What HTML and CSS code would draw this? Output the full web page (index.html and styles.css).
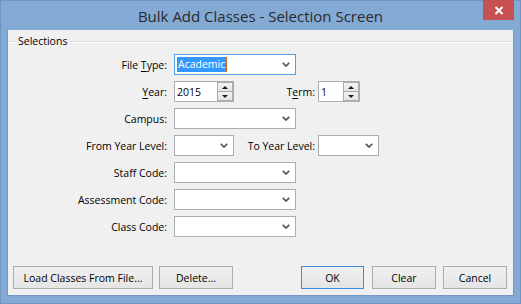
FILE: index.html
```html
<!DOCTYPE html>
<html>
<head>
<meta charset="utf-8">
<link rel="stylesheet" href="styles.css">
</head>
<body>
<div class="window">
  <div class="titlebar">
    <div></div>
    <div class="title">Bulk Add Classes - Selection Screen</div>
    <div class="close-wrap">
      <div class="close">
        <svg width="10" height="9" viewBox="0 0 10 9"><path d="M1.5 1 L8.5 8 M8.5 1 L1.5 8" stroke="#fff" stroke-width="2" fill="none"/></svg>
      </div>
    </div>
  </div>
  <div class="client">
    <div class="group-head"><span class="gl gl-left"></span><span class="gtitle">Selections</span><span class="gl gl-right"></span></div>
    <div class="form">
      <div class="row">
        <div class="lab">File <u>T</u>ype:</div>
        <div class="combo focus w122"><span class="val"><span class="sel">Academic</span><span class="caret"></span></span>
          <svg class="chev" width="8" height="5" viewBox="0 0 8 5"><path d="M0.8 0.8 L4 4 L7.2 0.8" stroke="#555" stroke-width="1.7" fill="none"/></svg></div>
      </div>
      <div class="row">
        <div class="lab"><u>Y</u>ear:</div>
        <div class="spin w60"><span class="val">2015</span><span class="spinbtns"><span class="sb up"></span><span class="sb down"></span></span></div>
        <div class="lab2">T<u>e</u>rm:</div>
        <div class="spin w42"><span class="val">1</span><span class="spinbtns"><span class="sb up"></span><span class="sb down"></span></span></div>
      </div>
      <div class="row">
        <div class="lab">Campus:</div>
        <div class="combo w122"><span class="val"></span>
          <svg class="chev" width="8" height="5" viewBox="0 0 8 5"><path d="M0.8 0.8 L4 4 L7.2 0.8" stroke="#555" stroke-width="1.7" fill="none"/></svg></div>
      </div>
      <div class="row">
        <div class="lab">From Year Level:</div>
        <div class="combo w60"><span class="val"></span>
          <svg class="chev" width="8" height="5" viewBox="0 0 8 5"><path d="M0.8 0.8 L4 4 L7.2 0.8" stroke="#555" stroke-width="1.7" fill="none"/></svg></div>
        <div class="lab2">To Year Level:</div>
        <div class="combo w61"><span class="val"></span>
          <svg class="chev" width="8" height="5" viewBox="0 0 8 5"><path d="M0.8 0.8 L4 4 L7.2 0.8" stroke="#555" stroke-width="1.7" fill="none"/></svg></div>
      </div>
      <div class="row">
        <div class="lab">Staff Code:</div>
        <div class="combo w122"><span class="val"></span>
          <svg class="chev" width="8" height="5" viewBox="0 0 8 5"><path d="M0.8 0.8 L4 4 L7.2 0.8" stroke="#555" stroke-width="1.7" fill="none"/></svg></div>
      </div>
      <div class="row">
        <div class="lab">Assessment Code:</div>
        <div class="combo w122"><span class="val"></span>
          <svg class="chev" width="8" height="5" viewBox="0 0 8 5"><path d="M0.8 0.8 L4 4 L7.2 0.8" stroke="#555" stroke-width="1.7" fill="none"/></svg></div>
      </div>
      <div class="row">
        <div class="lab">Class Code:</div>
        <div class="combo w122"><span class="val"></span>
          <svg class="chev" width="8" height="5" viewBox="0 0 8 5"><path d="M0.8 0.8 L4 4 L7.2 0.8" stroke="#555" stroke-width="1.7" fill="none"/></svg></div>
      </div>
    </div>
    <div class="buttons">
      <div class="btn b-load">Load Classes From File...</div>
      <div class="btn b-del">Delete...</div>
      <div class="spacer"></div>
      <div class="btn b-ok default">OK</div>
      <div class="btn b-clear">Clear</div>
      <div class="btn b-cancel">Cancel</div>
    </div>
  </div>
</div>
</body>
</html>
```

FILE: styles.css
```css
* { box-sizing: border-box; }
html, body { margin: 0; padding: 0; }
body {
  width: 521px; height: 304px; overflow: hidden;
  font-family: "Open Sans", "Noto Sans", sans-serif;
  font-size: 10.5px;
  color: #000;
}
.window {
  width: 521px; height: 304px;
  background: #83a9d5;
  border: 1px solid #6f95c5;
  display: flex; flex-direction: column;
  padding: 0 6px 7px 6px;
}
.titlebar {
  height: 29px;
  display: grid;
  grid-template-columns: 1fr auto 1fr;
  align-items: start;
}
.title {
  font-size: 15px;
  color: #2a2a2a;
  padding-top: 5px;
  line-height: 20px;
  white-space: nowrap;
}
.close-wrap { display: flex; justify-content: flex-end; }
.close {
  width: 31px; height: 20px;
  background: #c75050;
  display: flex; align-items: center; justify-content: center;
  margin-top: -1px;
}
.close svg { display: block; }
.client {
  flex: 1;
  background: #f0f0f0;
  border: 1px solid #7398c8;
  border-top: none;
  display: flex; flex-direction: column;
}
.group-head {
  height: 23px;
  display: flex; align-items: center;
}
.gl {
  height: 2px;
  border-top: 1px solid #d5dfe5;
  border-bottom: 1px solid #ffffff;
}
.gl-left { width: 8px; }
.gl-right { flex: 1; }
.gtitle { padding: 0 2px; line-height: 14px; margin-top: -1px; }
.form {
  display: flex; flex-direction: column;
  gap: 6px;
  margin-top: 1px;
}
.row {
  display: flex; align-items: center;
  height: 21px;
}
.lab {
  width: 160px; text-align: right;
  padding-right: 1px;
  margin-right: 6px;
  white-space: nowrap;
}
.lab2 {
  width: 81px; text-align: right;
  margin-right: 3px;
  white-space: nowrap;
}
u { text-decoration-thickness: 1px; text-underline-offset: 2px; }
.combo, .spin {
  height: 21px;
  background: #fff;
  border: 1px solid #abadb3;
  display: flex; align-items: center;
}
.combo.focus { border-color: #569de5; }
.w122 { width: 122px; }
.w60 { width: 60px; }
.w61 { width: 61px; }
.w42 { width: 42px; }
.val {
  flex: 1;
  padding-left: 2px;
  display: flex; align-items: center;
  height: 100%;
  white-space: nowrap;
}
.sel {
  background: #3399ff;
  color: #fff;
  padding: 0 1px;
  line-height: 15px;
}
.caret {
  width: 1px; height: 15px;
  background: #c8641e;
}
.chev { margin-right: 5px; flex: none; display: block; }
.spinbtns {
  width: 16px; height: 100%;
  display: flex; flex-direction: column;
}
.sb {
  flex: 1;
  background: linear-gradient(#f3f3f3, #e4e4e4);
  border: 1px solid #acacac;
  display: flex; align-items: center; justify-content: center;
}
.sb.up { border-bottom-width: 0; }
.sb::after {
  content: "";
  width: 0; height: 0;
  border-left: 3px solid transparent;
  border-right: 3px solid transparent;
}
.sb.up::after { border-bottom: 3px solid #1a1a1a; }
.sb.down::after { border-top: 3px solid #1a1a1a; }
.buttons {
  margin-top: auto;
  display: flex;
  padding: 0 6px 6px 5px;
}
.spacer { flex: 1; }
.btn {
  height: 23px;
  border: 1px solid #acacac;
  background: linear-gradient(#f0f0f0, #e5e5e5);
  display: flex; align-items: center; justify-content: center;
  white-space: nowrap;
  color: #000;
}
.btn.default { border-color: #3c8ce0; }
.b-load { width: 140px; margin-right: 6px; }
.b-del { width: 74px; }
.b-ok { width: 63px; margin-right: 8px; }
.b-clear { width: 64px; margin-right: 7px; }
.b-cancel { width: 64px; }
```
